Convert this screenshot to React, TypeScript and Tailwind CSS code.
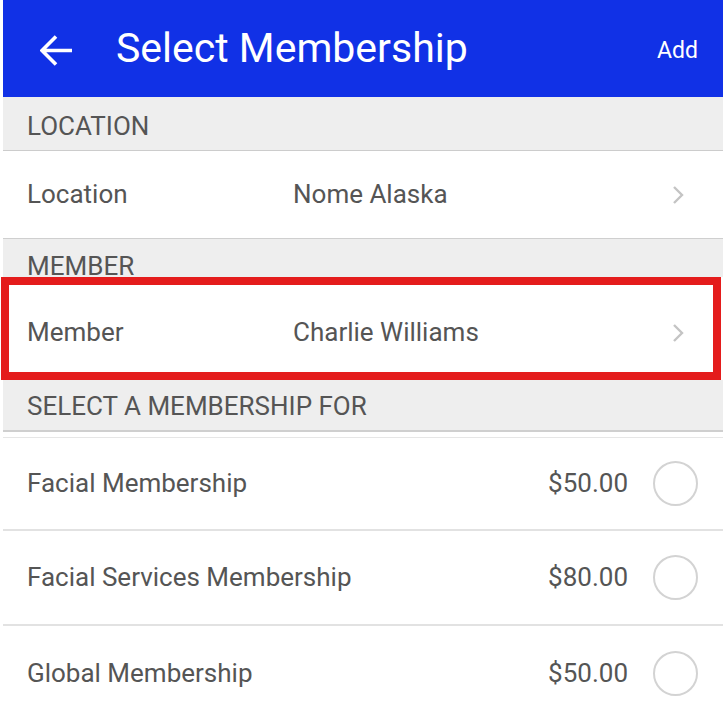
import React from "react";

type Plan = { name: string; price: string };

const plans: Plan[] = [
  { name: "Facial Membership", price: "$50.00" },
  { name: "Facial Services Membership", price: "$80.00" },
  { name: "Global Membership", price: "$50.00" },
];

function BackArrow() {
  return (
    <svg width="34" height="32" viewBox="0 0 34 32" fill="none" className="mt-[4px]">
      <path
        d="M2 15.5H32M16 1.5L2 15.5L16 29.5"
        stroke="#ffffff"
        strokeWidth="3.6"
        strokeLinejoin="miter"
      />
    </svg>
  );
}

function Chevron() {
  return (
    <svg width="14" height="22" viewBox="0 0 14 22" fill="none">
      <path d="M3 3L11 11L3 19" stroke="#c4c4c4" strokeWidth="2.4" />
    </svg>
  );
}

function DetailRow({
  label,
  value,
  className = "",
}: {
  label: string;
  value: string;
  className?: string;
}) {
  return (
    <div className={`flex h-full items-center bg-white text-[26px] text-[#555555] ${className}`}>
      <div className="w-[266px]">{label}</div>
      <div className="flex-1">{value}</div>
      <Chevron />
    </div>
  );
}

export default function App() {
  return (
    <div
      className="min-h-[715px] bg-white pl-[3px]"
      style={{ fontFamily: "Roboto, 'Noto Sans', sans-serif" }}
    >
      {/* top bar */}
      <div className="flex h-[97px] items-center bg-[#1131e6] pl-[37px] pr-[25px] text-white">
        <BackArrow />
        <div className="ml-[42px] flex-1 text-[41px] leading-none">Select Membership</div>
        <div className="mt-[6px] text-[23px]">Add</div>
      </div>

      <div className="h-[54px] border-b border-[#cccccc] bg-[#eeeeee] pl-[24px] pt-[16px] text-[26px] leading-none text-[#555555]">
        LOCATION
      </div>
      <div className="h-[87px]">
        <DetailRow label="Location" value="Nome Alaska" className="pl-[24px] pr-[38px]" />
      </div>

      <div className="h-[39px] border-t border-[#cfcfcf] bg-[#eeeeee] pl-[24px] pt-[14px] text-[26px] leading-none text-[#555555]">
        MEMBER
      </div>
      <div className="ml-[-2px] mr-[2px] h-[103px] border-[8px] border-[#e41c1c]">
        <DetailRow
          label="Member"
          value="Charlie Williams"
          className="pl-[18px] pr-[28px] pt-[8px]"
        />
      </div>

      <div className="h-[52px] border-b-2 border-[#cfcfcf] bg-[#eeeeee] pl-[24px] pt-[13px] text-[26px] leading-none text-[#555555]">
        SELECT A MEMBERSHIP FOR
      </div>
      <div className="mt-[5px] border-t border-[#e6e6e6]">
        {plans.map((p, i) => (
          <div
            key={p.name}
            className={`flex items-center pl-[24px] pr-[25px] text-[26px] text-[#555555] ${
              i < plans.length - 1 ? "border-b-2 border-[#e2e2e2]" : ""
            } ${i > 0 ? "h-[95px]" : "h-[93px]"}`}
          >
            <div className="flex-1">{p.name}</div>
            <div className="mr-[25px]">{p.price}</div>
            <div className="h-[45px] w-[45px] rounded-full border-[2.5px] border-[#d3d3d3]" />
          </div>
        ))}
      </div>
    </div>
  );
}
